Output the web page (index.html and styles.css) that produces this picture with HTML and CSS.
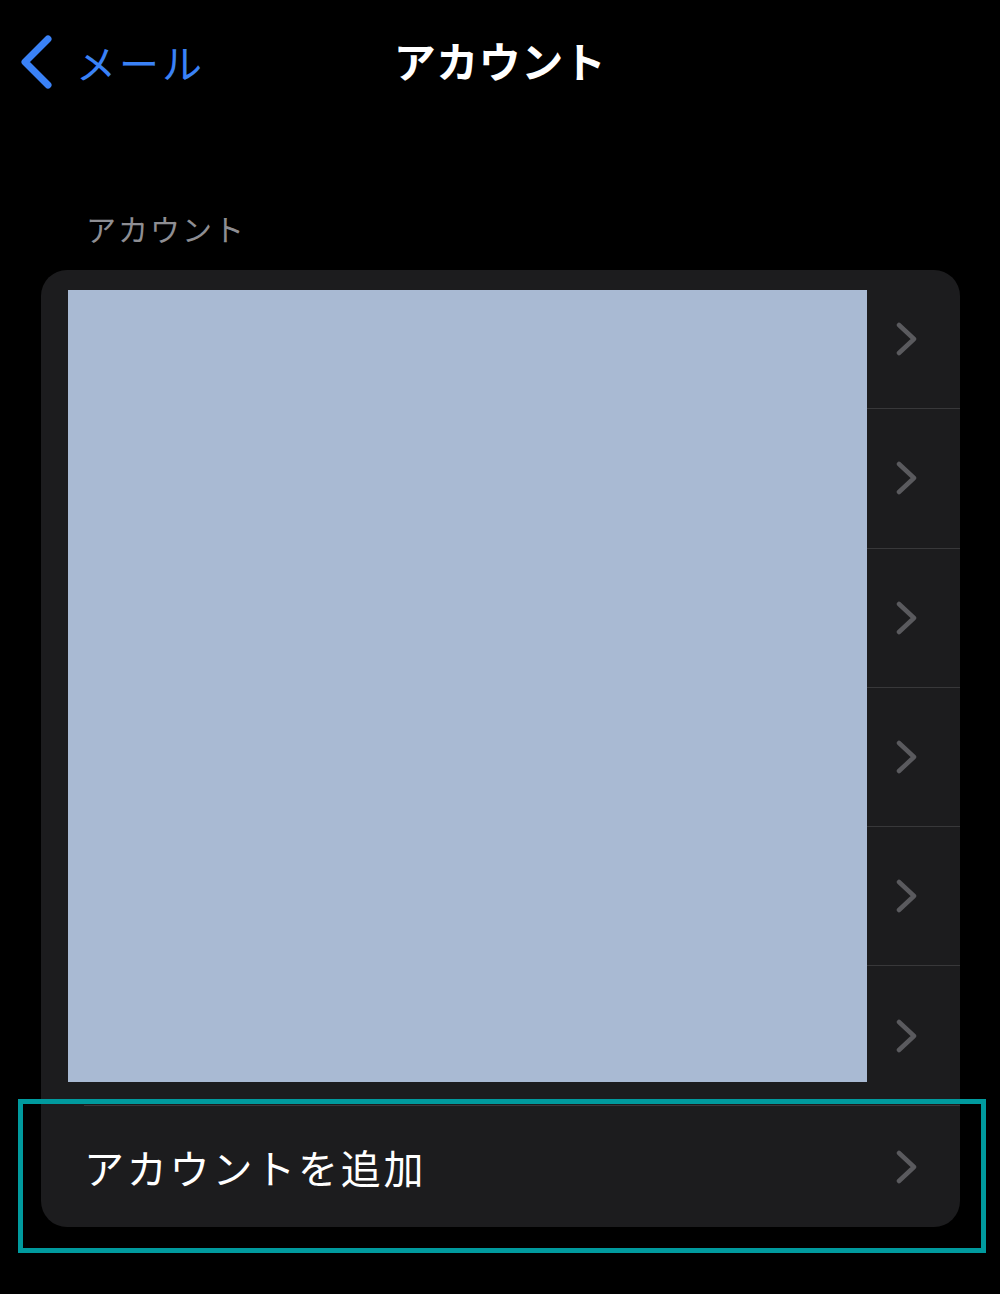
FILE: index.html
```html
<!DOCTYPE html>
<html lang="ja">
<head>
<meta charset="utf-8">
<link rel="stylesheet" href="styles.css">
</head>
<body>
<div class="screen">
  <header class="nav">
    <div class="back">
      <svg class="back-icon" width="36" height="54" viewBox="0 0 36 54"><path d="M30 4 L7 27 L30 50" fill="none" stroke="#3a82f7" stroke-width="7" stroke-linecap="round" stroke-linejoin="round"/></svg>
      <span class="back-label">メール</span>
    </div>
    <h1 class="title">アカウント</h1>
  </header>

  <div class="section-header">アカウント</div>

  <div class="card">
    <div class="accounts">
      <div class="row"><span class="chev"><svg width="22" height="34" viewBox="0 0 22 34"><path d="M3 3 L18 17 L3 31" fill="none" stroke="#5a5a5e" stroke-width="4.5" stroke-linecap="round" stroke-linejoin="round"/></svg></span></div>
      <div class="row"><span class="chev"><svg width="22" height="34" viewBox="0 0 22 34"><path d="M3 3 L18 17 L3 31" fill="none" stroke="#5a5a5e" stroke-width="4.5" stroke-linecap="round" stroke-linejoin="round"/></svg></span></div>
      <div class="row"><span class="chev"><svg width="22" height="34" viewBox="0 0 22 34"><path d="M3 3 L18 17 L3 31" fill="none" stroke="#5a5a5e" stroke-width="4.5" stroke-linecap="round" stroke-linejoin="round"/></svg></span></div>
      <div class="row"><span class="chev"><svg width="22" height="34" viewBox="0 0 22 34"><path d="M3 3 L18 17 L3 31" fill="none" stroke="#5a5a5e" stroke-width="4.5" stroke-linecap="round" stroke-linejoin="round"/></svg></span></div>
      <div class="row"><span class="chev"><svg width="22" height="34" viewBox="0 0 22 34"><path d="M3 3 L18 17 L3 31" fill="none" stroke="#5a5a5e" stroke-width="4.5" stroke-linecap="round" stroke-linejoin="round"/></svg></span></div>
      <div class="row"><span class="chev"><svg width="22" height="34" viewBox="0 0 22 34"><path d="M3 3 L18 17 L3 31" fill="none" stroke="#5a5a5e" stroke-width="4.5" stroke-linecap="round" stroke-linejoin="round"/></svg></span></div>
      <div class="redact"></div>
    </div>
    <div class="row add-row">
      <span class="add-label">アカウントを追加</span>
      <span class="chev"><svg width="22" height="34" viewBox="0 0 22 34"><path d="M3 3 L18 17 L3 31" fill="none" stroke="#5a5a5e" stroke-width="4.5" stroke-linecap="round" stroke-linejoin="round"/></svg></span>
    </div>
  </div>
  <div class="highlight"></div>
</div>
</body>
</html>
```

FILE: styles.css
```css
* { box-sizing: border-box; margin: 0; padding: 0; }
html, body { background: #000; }
body {
  width: 1000px;
  height: 1294px;
  overflow: hidden;
  font-family: "Noto Sans CJK JP", "Noto Sans", sans-serif;
}
.screen {
  position: relative;
  width: 1000px;
  height: 1294px;
  padding-top: 32px;
}
.nav {
  position: relative;
  height: 60px;
  display: flex;
  align-items: center;
}
.back {
  display: flex;
  align-items: center;
  gap: 22px;
  padding-left: 18px;
}
.back-icon { display: block; }
.back-label {
  color: #3a82f7;
  font-size: 40px;
  line-height: 1;
  letter-spacing: 3px;
}
.title {
  position: absolute;
  left: 0;
  right: 0;
  top: -2px;
  text-align: center;
  color: #fff;
  font-size: 42px;
  font-weight: 700;
  line-height: 60px;
  letter-spacing: 0.5px;
}
.section-header {
  margin-top: 116px;
  padding-left: 86px;
  color: #8e8e93;
  font-size: 30px;
  line-height: 40px;
  letter-spacing: 2px;
}
.card {
  margin: 22px 40px 0 41px;
  background: #1c1c1e;
  border-radius: 26px;
  overflow: hidden;
}
.accounts {
  position: relative;
}
.row {
  height: 139.3px;
  display: flex;
  align-items: center;
  justify-content: flex-end;
  padding-right: 42px;
  margin-left: 43px;
  border-bottom: 1px solid #38383a;
}
.chev { display: flex; }
.chev svg { display: block; }
.redact {
  position: absolute;
  left: 27px;
  top: 20px;
  width: 799px;
  height: 792px;
  background: #a9bad3;
}
.add-row {
  height: 121px;
  justify-content: space-between;
  border-bottom: none;
  padding-top: 2px;
}
.add-label {
  color: #fff;
  font-size: 40px;
  line-height: 1;
  letter-spacing: 2.8px;
}
.highlight {
  position: absolute;
  left: 18px;
  top: 1099px;
  width: 968px;
  height: 154px;
  border: 5px solid #009a9e;
}
```
